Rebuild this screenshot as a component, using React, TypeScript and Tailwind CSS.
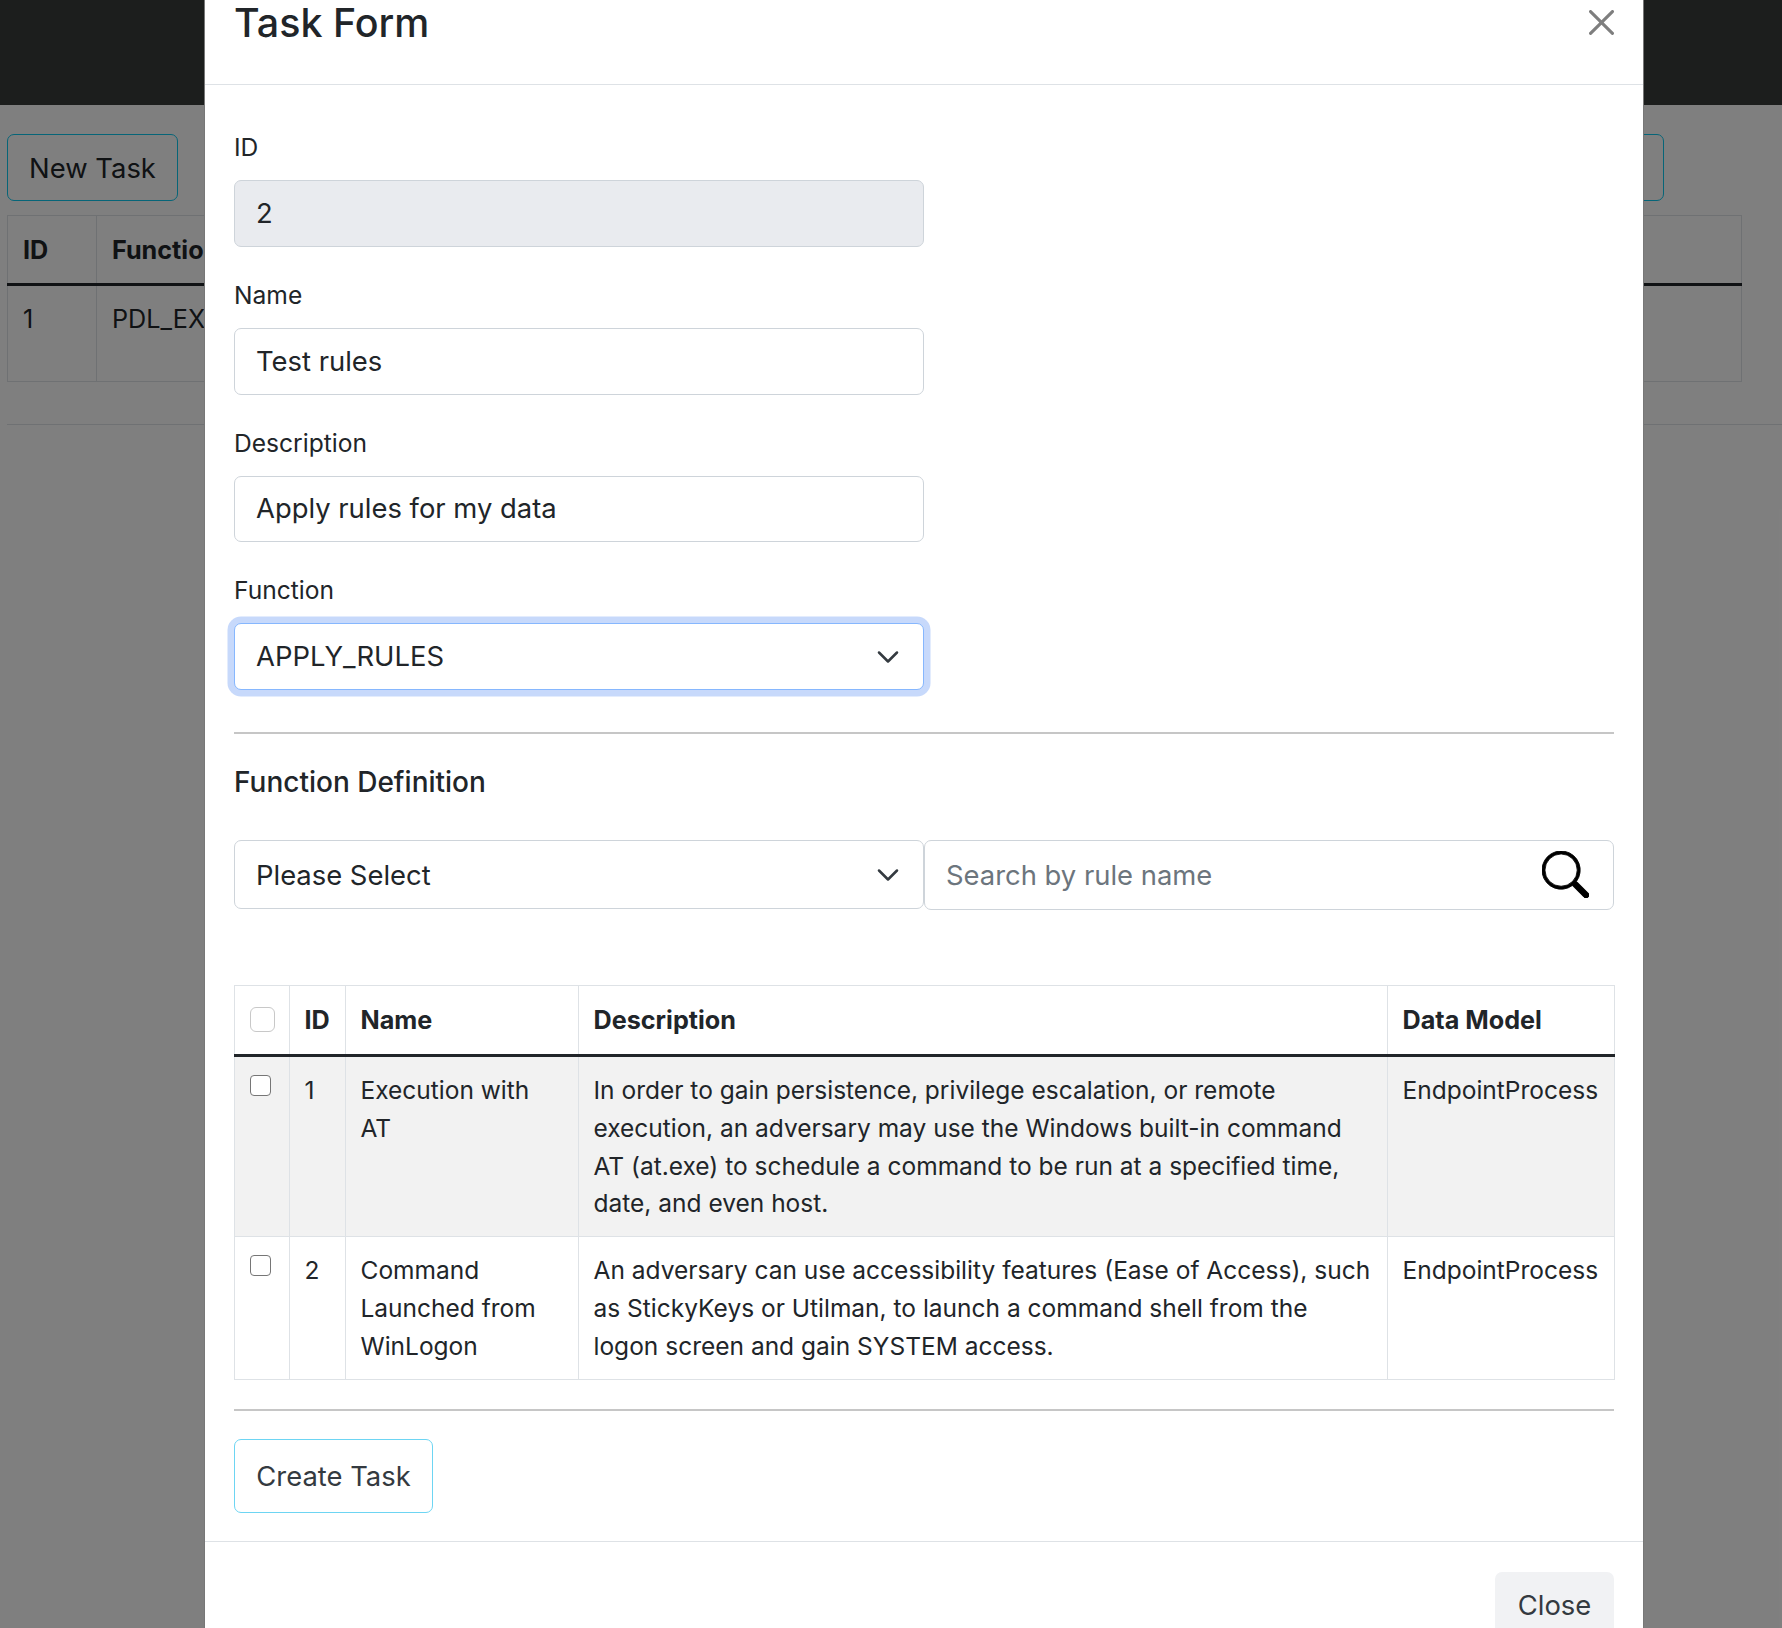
const labelClass = "block text-[24.6px] leading-[37px] text-[#212529] mb-[14px]";
const inputClass =
  "block w-[690px] h-[67px] px-[21px] pb-[2px] text-[27.4px] text-[#212529] bg-white border border-[#ced4da] rounded-[7px] outline-none";

const Chevron = () => (
  <svg viewBox="0 0 16 16" className="absolute right-[23px] top-1/2 -translate-y-1/2 w-[24px] h-[24px]" fill="none">
    <path d="M2 5l6 6 6-6" stroke="#343a40" strokeWidth="1.7" strokeLinecap="round" strokeLinejoin="round" />
  </svg>
);

const rows = [
  {
    id: 1,
    name: "Execution with AT",
    description:
      "In order to gain persistence, privilege escalation, or remote execution, an adversary may use the Windows built-in command AT (at.exe) to schedule a command to be run at a specified time, date, and even host.",
    model: "EndpointProcess",
  },
  {
    id: 2,
    name: "Command Launched from WinLogon",
    description:
      "An adversary can use accessibility features (Ease of Access), such as StickyKeys or Utilman, to launch a command shell from the logon screen and gain SYSTEM access.",
    model: "EndpointProcess",
  },
];

const App = () => {
  return (
    <div className="relative h-screen overflow-hidden bg-white font-['Inter',sans-serif] text-[#212529]">
      {/* page behind the dialog */}
      <div className="h-[105px] bg-[#383c3a]" />
      <div className="px-[7px] pt-[29px]">
        <div className="flex justify-between pr-[111px]">
          <button className="w-[171px] h-[67px] pt-[2px] text-[27.4px] text-[#212529] border border-[#0dcaf0] rounded-[7px]">
            New Task
          </button>
          <div className="w-[600px] h-[67px] border border-[#0dcaf0] rounded-[7px]" />
        </div>
        <table className="mt-[14px] w-[1735px] border-collapse text-[25.2px] text-[#212529]">
          <thead>
            <tr className="h-[69px] border-b-[3px] border-[#212529]">
              <th className="w-[89px] px-[15px] pt-[2px] text-left font-bold border border-[#dee2e6] border-b-[#212529]">ID</th>
              <th className="px-[15px] pt-[2px] text-left font-bold border border-[#dee2e6] border-b-[#212529]">Function</th>
            </tr>
          </thead>
          <tbody>
            <tr className="h-[97px] align-top text-[25.2px] leading-[38px]">
              <td className="px-[15px] py-[14px] border border-[#dee2e6]">1</td>
              <td className="px-[15px] py-[14px] border border-[#dee2e6]">PDL_EXECUTE</td>
            </tr>
          </tbody>
        </table>
        <div className="mt-[42px] border-t border-[#dee2e6] -mr-[7px]" />
      </div>

      <div className="absolute inset-0 bg-black/50" />

      {/* dialog */}
      <div className="absolute left-[204px] top-[-25px] w-[1440px] bg-white border-x border-[#777]">
        <div className="relative h-[110px] border-b border-[#dee2e6] pl-[29px] pt-[22px]">
          <h5 className="text-[39.4px] leading-[52px] font-medium">Task Form</h5>
          <svg viewBox="0 0 16 16" className="absolute right-[29px] top-[35px] w-[25px] h-[25px] opacity-50" fill="#000">
            <path d="M.293.293a1 1 0 011.414 0L8 6.586 14.293.293a1 1 0 111.414 1.414L9.414 8l6.293 6.293a1 1 0 01-1.414 1.414L8 9.414l-6.293 6.293a1 1 0 01-1.414-1.414L6.586 8 .293 1.707a1 1 0 010-1.414z" />
          </svg>
        </div>

        <div className="px-[29px] pt-[44px]">
          <div className="mb-[30px]">
            <label className={labelClass}>ID</label>
            <input readOnly value="2" className={inputClass + " !bg-[#e9ebef]"} />
          </div>
          <div className="mb-[30px]">
            <label className={labelClass}>Name</label>
            <input readOnly value="Test rules" className={inputClass} />
          </div>
          <div className="mb-[30px]">
            <label className={labelClass}>Description</label>
            <input readOnly value="Apply rules for my data" className={inputClass + " !h-[66px]"} />
          </div>
          <div>
            <label className={labelClass}>Function</label>
            <div className="relative w-[690px] h-[67px] flex items-center px-[21px] text-[27.4px] bg-white border border-[#86b7fe] rounded-[7px] shadow-[0_0_0_6.5px_#c7d9fb]">
              APPLY_RULES
              <Chevron />
            </div>
          </div>

          <hr className="mt-[42px] border-t-2 border-[#c6c6c6]" />
          <h5 className="mt-[27px] text-[28px] leading-[42px] font-medium">Function Definition</h5>

          <div className="mt-[37px] flex items-start">
            <div className="relative w-[690px] h-[69px] flex items-center px-[21px] pt-[2px] text-[27.4px] bg-white border border-[#ced4da] rounded-[7px]">
              Please Select
              <Chevron />
            </div>
            <div className="relative w-[690px] h-[70px]">
              <input
                readOnly
                placeholder="Search by rule name"
                className="block w-full h-full px-[21px] text-[27.4px] bg-white border border-[#ced4da] rounded-[7px] outline-none placeholder:text-[#6c757d]"
              />
              <svg viewBox="0 0 16 16" className="absolute right-[25px] top-[11px] w-[47px] h-[47px]" fill="#000" stroke="#000" strokeWidth="0.3">
                <path d="M11.742 10.344a6.5 6.5 0 1 0-1.397 1.398h-.001c.03.04.062.078.098.115l3.85 3.85a1 1 0 0 0 1.415-1.414l-3.85-3.85a1.007 1.007 0 0 0-.115-.1zM12 6.5a5.5 5.5 0 1 1-11 0 5.5 5.5 0 0 1 11 0z" />
              </svg>
            </div>
          </div>

          <table className="mt-[75px] w-[1380px] table-fixed border-collapse text-[24.5px] leading-[37.8px]">
            <colgroup>
              <col className="w-[55px]" />
              <col className="w-[56px]" />
              <col className="w-[233px]" />
              <col className="w-[809px]" />
              <col className="w-[227px]" />
            </colgroup>
            <thead className="text-[25.2px]">
              <tr className="h-[70px]">
                <th className="border border-[#dee2e6] border-b-[3px] border-b-[#212529] pl-[15px] text-left">
                  <span className="inline-block align-middle mb-[4px] w-[25px] h-[25px] rounded-[6px] border border-[#c8c8c8] bg-white" />
                </th>
                <th className="px-[14.5px] pt-[2px] text-left font-bold border border-[#dee2e6] border-b-[3px] border-b-[#212529]">ID</th>
                <th className="px-[14.5px] pt-[2px] text-left font-bold border border-[#dee2e6] border-b-[3px] border-b-[#212529]">Name</th>
                <th className="px-[14.5px] pt-[2px] text-left font-bold border border-[#dee2e6] border-b-[3px] border-b-[#212529]">Description</th>
                <th className="px-[14.5px] pt-[2px] text-left font-bold border border-[#dee2e6] border-b-[3px] border-b-[#212529]">Data Model</th>
              </tr>
            </thead>
            <tbody>
              {rows.map((row) => (
                <tr key={row.id} className={"align-top " + (row.id === 1 ? "bg-[#f2f2f2]" : "bg-white")}>
                  <td className="border border-[#dee2e6] pt-[18px] pl-[15px] text-left leading-none">
                    <span className="inline-block w-[21px] h-[21px] rounded-[4px] border-[1.5px] border-[#767676] bg-white" />
                  </td>
                  <td className="border border-[#dee2e6] px-[14.5px] pt-[15px] pb-[13px]">{row.id}</td>
                  <td className="border border-[#dee2e6] px-[14.5px] pt-[15px] pb-[13px]">{row.name}</td>
                  <td className="border border-[#dee2e6] px-[14.5px] pt-[15px] pb-[13px]">{row.description}</td>
                  <td className="border border-[#dee2e6] px-[14.5px] pt-[15px] pb-[13px]">{row.model}</td>
                </tr>
              ))}
            </tbody>
          </table>

          <hr className="mt-[29px] border-t-2 border-[#c6c6c6]" />
          <button className="mt-[28px] mb-[28px] block w-[199px] h-[74px] pt-[1px] text-[27.4px] text-[#343a40] border border-[#6dd5f3] rounded-[7px]">
            Create Task
          </button>
        </div>

        <div className="border-t border-[#dee2e6] px-[29px] pt-[30px] pb-[20px] flex justify-end">
          <button className="w-[119px] h-[67px] text-[27.4px] text-[#343a40] bg-[#f1f2f4] rounded-[7px]">Close</button>
        </div>
      </div>
    </div>
  );
};

export default App;
